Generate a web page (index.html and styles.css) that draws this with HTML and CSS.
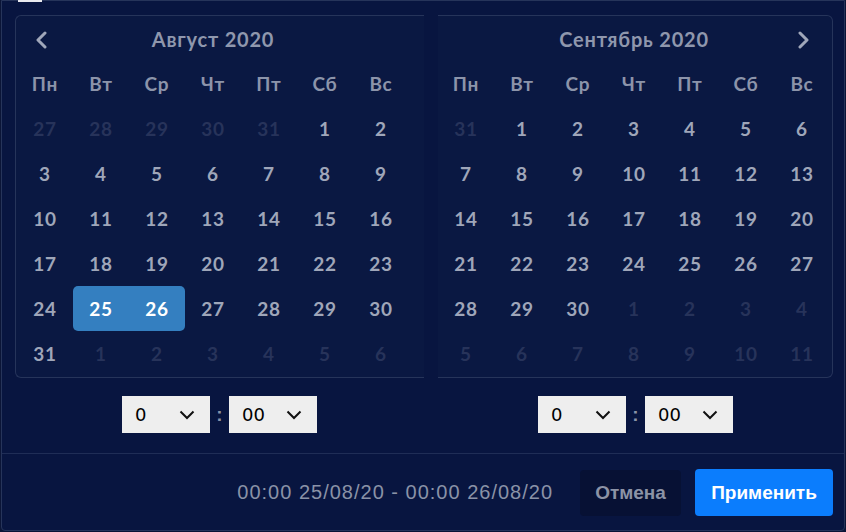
FILE: index.html
```html
<!DOCTYPE html>
<html lang="ru">
<head>
<meta charset="utf-8">
<link rel="stylesheet" href="styles.css">
</head>
<body>
<div class="panel">
  <span class="peek"></span>
  <div class="cals">
    <div class="col">
      <div class="cal cal-left">
        <div class="head">
          <span class="arrow arrow-left"><svg width="14" height="18" viewBox="0 0 14 18"><path d="M10 2 L3 9 L10 16" fill="none" stroke="#a0a7ba" stroke-width="3" stroke-linecap="round" stroke-linejoin="round"/></svg></span>
          <span class="title">Август 2020</span>
        </div>
        <div class="grid">
          <span class="dow">Пн</span><span class="dow">Вт</span><span class="dow">Ср</span><span class="dow">Чт</span><span class="dow">Пт</span><span class="dow">Сб</span><span class="dow">Вс</span>
          <span class="d off">27</span><span class="d off">28</span><span class="d off">29</span><span class="d off">30</span><span class="d off">31</span><span class="d">1</span><span class="d">2</span>
          <span class="d">3</span><span class="d">4</span><span class="d">5</span><span class="d">6</span><span class="d">7</span><span class="d">8</span><span class="d">9</span>
          <span class="d">10</span><span class="d">11</span><span class="d">12</span><span class="d">13</span><span class="d">14</span><span class="d">15</span><span class="d">16</span>
          <span class="d">17</span><span class="d">18</span><span class="d">19</span><span class="d">20</span><span class="d">21</span><span class="d">22</span><span class="d">23</span>
          <span class="d">24</span><span class="d sel sel-start">25</span><span class="d sel sel-end">26</span><span class="d">27</span><span class="d">28</span><span class="d">29</span><span class="d">30</span>
          <span class="d">31</span><span class="d off">1</span><span class="d off">2</span><span class="d off">3</span><span class="d off">4</span><span class="d off">5</span><span class="d off">6</span>
        </div>
      </div>
      <div class="time">
        <div class="sel-box"><span>0</span><svg width="16" height="10" viewBox="0 0 16 10"><path d="M1.5 1.5 L8 8 L14.5 1.5" fill="none" stroke="#111" stroke-width="2"/></svg></div>
        <span class="colon">:</span>
        <div class="sel-box"><span>00</span><svg width="16" height="10" viewBox="0 0 16 10"><path d="M1.5 1.5 L8 8 L14.5 1.5" fill="none" stroke="#111" stroke-width="2"/></svg></div>
      </div>
    </div>
    <div class="col col-right">
      <div class="cal cal-right">
        <div class="head">
          <span class="title">Сентябрь 2020</span>
          <span class="arrow arrow-right"><svg width="14" height="18" viewBox="0 0 14 18"><path d="M4 2 L11 9 L4 16" fill="none" stroke="#a0a7ba" stroke-width="3" stroke-linecap="round" stroke-linejoin="round"/></svg></span>
        </div>
        <div class="grid">
          <span class="dow">Пн</span><span class="dow">Вт</span><span class="dow">Ср</span><span class="dow">Чт</span><span class="dow">Пт</span><span class="dow">Сб</span><span class="dow">Вс</span>
          <span class="d off">31</span><span class="d">1</span><span class="d">2</span><span class="d">3</span><span class="d">4</span><span class="d">5</span><span class="d">6</span>
          <span class="d">7</span><span class="d">8</span><span class="d">9</span><span class="d">10</span><span class="d">11</span><span class="d">12</span><span class="d">13</span>
          <span class="d">14</span><span class="d">15</span><span class="d">16</span><span class="d">17</span><span class="d">18</span><span class="d">19</span><span class="d">20</span>
          <span class="d">21</span><span class="d">22</span><span class="d">23</span><span class="d">24</span><span class="d">25</span><span class="d">26</span><span class="d">27</span>
          <span class="d">28</span><span class="d">29</span><span class="d">30</span><span class="d off">1</span><span class="d off">2</span><span class="d off">3</span><span class="d off">4</span>
          <span class="d off">5</span><span class="d off">6</span><span class="d off">7</span><span class="d off">8</span><span class="d off">9</span><span class="d off">10</span><span class="d off">11</span>
        </div>
      </div>
      <div class="time">
        <div class="sel-box"><span>0</span><svg width="16" height="10" viewBox="0 0 16 10"><path d="M1.5 1.5 L8 8 L14.5 1.5" fill="none" stroke="#111" stroke-width="2"/></svg></div>
        <span class="colon">:</span>
        <div class="sel-box"><span>00</span><svg width="16" height="10" viewBox="0 0 16 10"><path d="M1.5 1.5 L8 8 L14.5 1.5" fill="none" stroke="#111" stroke-width="2"/></svg></div>
      </div>
    </div>
  </div>
  <div class="footer">
    <span class="range">00:00 25/08/20 - 00:00 26/08/20</span>
    <button class="btn btn-cancel">Отмена</button>
    <button class="btn btn-apply">Применить</button>
  </div>
</div>
</body>
</html>
```
FILE: styles.css
```css
* { box-sizing: border-box; }
html, body {
  margin: 0;
  padding: 0;
  background: #0b1537;
  width: 846px;
  height: 532px;
  overflow: hidden;
}
.panel {
  position: relative;
  margin: 0 1px;
  height: 531px;
  border: 1px solid #26345a;
  border-radius: 0 0 4px 4px;
  background: #081540;
  font-family: Lato, "Open Sans", sans-serif;
}
.peek {
  position: absolute;
  left: 16px;
  top: -1px;
  width: 24px;
  height: 2px;
  background: #e9e9ee;
}
.cals {
  display: flex;
  padding: 14px 0 0 13px;
}
.col {
  display: flex;
  flex-direction: column;
  align-items: center;
}
.col-right { margin-left: 14px; }
.cal {
  background: #0a1842;
  border: 1px solid #26345a;
  padding-bottom: 1px;
}
.cal-left {
  width: 409px;
  border-right: none;
  border-radius: 6px 0 0 6px;
  padding-left: 1px;
  padding-right: 16px;
}
.cal-right {
  width: 395px;
  border-left: none;
  border-radius: 0 6px 6px 0;
  padding-right: 2px;
}
.head {
  position: relative;
  height: 45px;
  display: flex;
  align-items: center;
  justify-content: center;
  width: 392px;
}
.title {
  color: #8f97ad;
  font-weight: 700;
  font-size: 20px;
  letter-spacing: 0.8px;
}
.arrow {
  position: absolute;
  top: 15px;
  display: flex;
}
.arrow-left { left: 18px; }
.arrow-right { right: 20px; }
.grid {
  display: grid;
  grid-template-columns: repeat(7, 56px);
  grid-auto-rows: 45px;
}
.dow, .d {
  display: flex;
  align-items: center;
  justify-content: center;
  font-weight: 700;
  font-size: 19px;
  letter-spacing: 0.8px;
}
.dow { color: #8c94aa; }
.d { color: #9fa6b9; }
.d.off { color: #27335a; }
.d.sel {
  background: #347fc0;
  color: #ffffff;
}
.sel-start { border-radius: 5px 0 0 5px; }
.sel-end { border-radius: 0 5px 5px 0; }
.time {
  display: flex;
  align-items: center;
  margin-top: 18px;
  gap: 5px;
}
.sel-box {
  width: 88px;
  height: 37px;
  background: #eeeeee;
  display: flex;
  align-items: center;
  justify-content: space-between;
  padding: 0 15px 0 13px;
  font-family: "DejaVu Sans", sans-serif;
  font-size: 18px;
  color: #000;
}
.sel-box svg { display: block; }
.colon {
  color: #8a93a8;
  font-family: "Liberation Sans", sans-serif;
  font-size: 19px;
  font-weight: 700;
  width: 9px;
  text-align: center;
}
.footer {
  margin-top: 20px;
  border-top: 1px solid #1f2d56;
  display: flex;
  align-items: center;
  justify-content: flex-end;
  padding: 15px 11px 0 0;
  font-family: "Liberation Sans", sans-serif;
}
.range {
  color: #8a92a7;
  font-size: 20px;
  letter-spacing: 1px;
  margin-right: 27px;
}
.btn {
  border: none;
  font-family: "Liberation Sans", sans-serif;
  font-weight: 700;
  font-size: 19px;
  border-radius: 4px;
  padding: 0;
  height: 46px;
}
.btn-cancel {
  width: 101px;
  background: #071134;
  color: #8c93a6;
  margin-right: 14px;
}
.btn-apply {
  width: 138px;
  height: 47px;
  background: #0b7dfd;
  color: #ffffff;
}
```
